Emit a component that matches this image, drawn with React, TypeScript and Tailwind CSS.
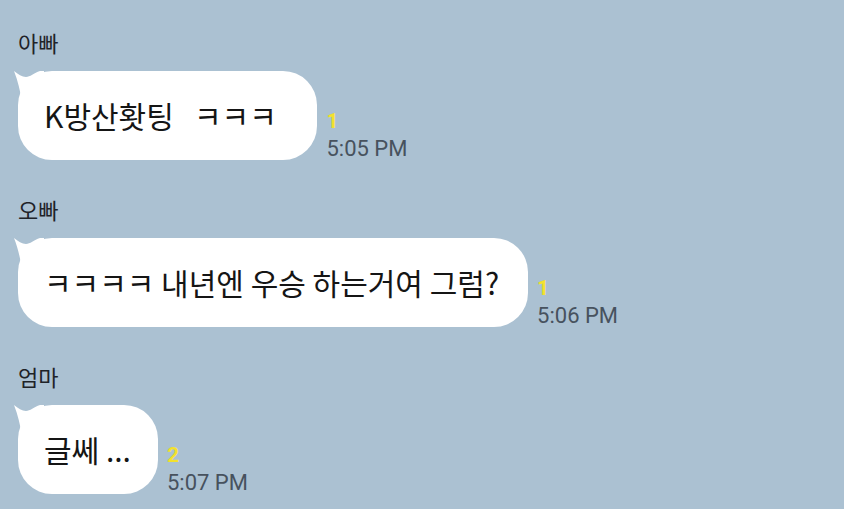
import React from 'react';

type Msg = { name: string; text: string; unread: number; time: string; pad: string };

const messages: Msg[] = [
  { name: '아빠', text: 'K방산홧팅   ㅋㅋㅋ ', unread: 1, time: '5:05 PM', pad: 'pr-[34px]' },
  { name: '오빠', text: 'ㅋㅋㅋㅋ 내년엔 우승 하는거여 그럼?', unread: 1, time: '5:06 PM', pad: 'pr-[29px]' },
  { name: '엄마', text: '글쎄 ...', unread: 2, time: '5:07 PM', pad: 'pr-[27px]' },
];

const KR = { fontFamily: '"Noto Sans CJK KR", "Noto Sans", sans-serif' };
const LATIN = { fontFamily: 'Roboto, "Liberation Sans", sans-serif' };

function Tail() {
  return (
    <svg className="absolute left-[-4px] top-0" width="30" height="30" viewBox="0 0 30 30">
      <path d="M0 0 C4 3 8 6 12 6 C16 6 20 2 26 0 L30 0 L30 30 L8 30 C6 20 4 10 0 0 Z" fill="#ffffff" />
    </svg>
  );
}

function Message({ msg }: { msg: Msg }) {
  return (
    <div className="flex flex-col">
      <div className="text-[22px] leading-[24px] text-[#1f2328]" style={KR}>
        {msg.name}
      </div>
      <div className="mt-[17px] flex items-end">
        <div className="relative">
          <Tail />
          <div
            className={`relative flex h-[89px] items-center whitespace-pre rounded-[34px] bg-white pl-[26px] text-[30px] text-[#151515] ${msg.pad}`}
            style={KR}
          >
            {msg.text}
          </div>
        </div>
        <div className="ml-[9px] flex flex-col">
          <span className="text-[21px] font-bold leading-[20px] text-[#f3e12c]" style={LATIN}>
            {msg.unread}
          </span>
          <span className="mt-[7px] text-[22px] leading-[22px] text-[#47525e]" style={LATIN}>
            {msg.time}
          </span>
        </div>
      </div>
    </div>
  );
}

export default function App() {
  return (
    <div className="h-[509px] w-[844px] overflow-hidden bg-[#abc1d2] pl-[18px] pt-[30px]">
      <div className="flex flex-col gap-[37px]">
        {messages.map((m) => (
          <Message key={m.time} msg={m} />
        ))}
      </div>
    </div>
  );
}
